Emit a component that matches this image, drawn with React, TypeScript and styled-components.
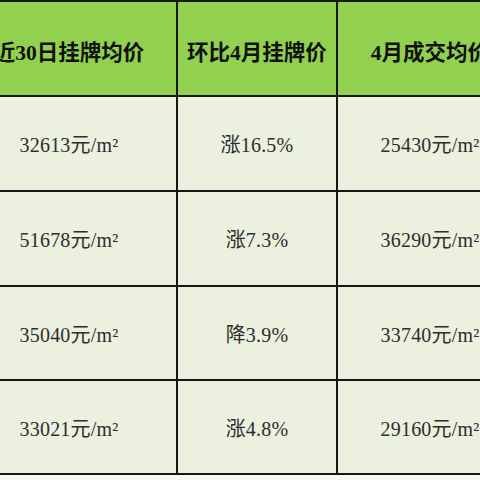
import styled, { createGlobalStyle } from "styled-components";

const GlobalStyle = createGlobalStyle`
  html, body {
    margin: 0;
    padding: 0;
    background: #f7f7f2;
    overflow: hidden;
  }
`;

const Page = styled.div`
  width: 480px;
  height: 480px;
  overflow: hidden;
`;

const Table = styled.div`
  display: grid;
  grid-template-columns: 214px 158px 184px;
  grid-template-rows: 93px 93px 93px 92px 92px;
  gap: 2px;
  padding: 2px 2px 2px;
  margin-left: -40px;
  width: max-content;
  background: #161616;
`;

const Cell = styled.div<{ $head?: boolean }>`
  display: flex;
  align-items: center;
  justify-content: center;
  background: ${({ $head }) => ($head ? "#92d050" : "#ebf0df")};
  color: ${({ $head }) => ($head ? "#111" : "#2e2e2e")};
  font-family: "Liberation Serif", "DejaVu Serif", "Noto Sans CJK SC", serif;
  font-size: ${({ $head }) => ($head ? "21.5px" : "20px")};
  font-weight: ${({ $head }) => ($head ? 700 : 400)};
  letter-spacing: ${({ $head }) => ($head ? "0" : "0.2px")};
  white-space: nowrap;
  padding-top: ${({ $head }) => ($head ? "3px" : "0")};
`;

const headers = ["近30日挂牌均价", "环比4月挂牌价", "4月成交均价"];

const rows = [
  ["32613元/m²", "涨16.5%", "25430元/m²"],
  ["51678元/m²", "涨7.3%", "36290元/m²"],
  ["35040元/m²", "降3.9%", "33740元/m²"],
  ["33021元/m²", "涨4.8%", "29160元/m²"],
];

export default function App() {
  return (
    <>
      <GlobalStyle />
      <Page>
        <Table>
          {headers.map((h) => (
            <Cell $head key={h}>
              {h}
            </Cell>
          ))}
          {rows.map((row, i) =>
            row.map((value, j) => <Cell key={`${i}-${j}`}>{value}</Cell>)
          )}
        </Table>
      </Page>
    </>
  );
}
